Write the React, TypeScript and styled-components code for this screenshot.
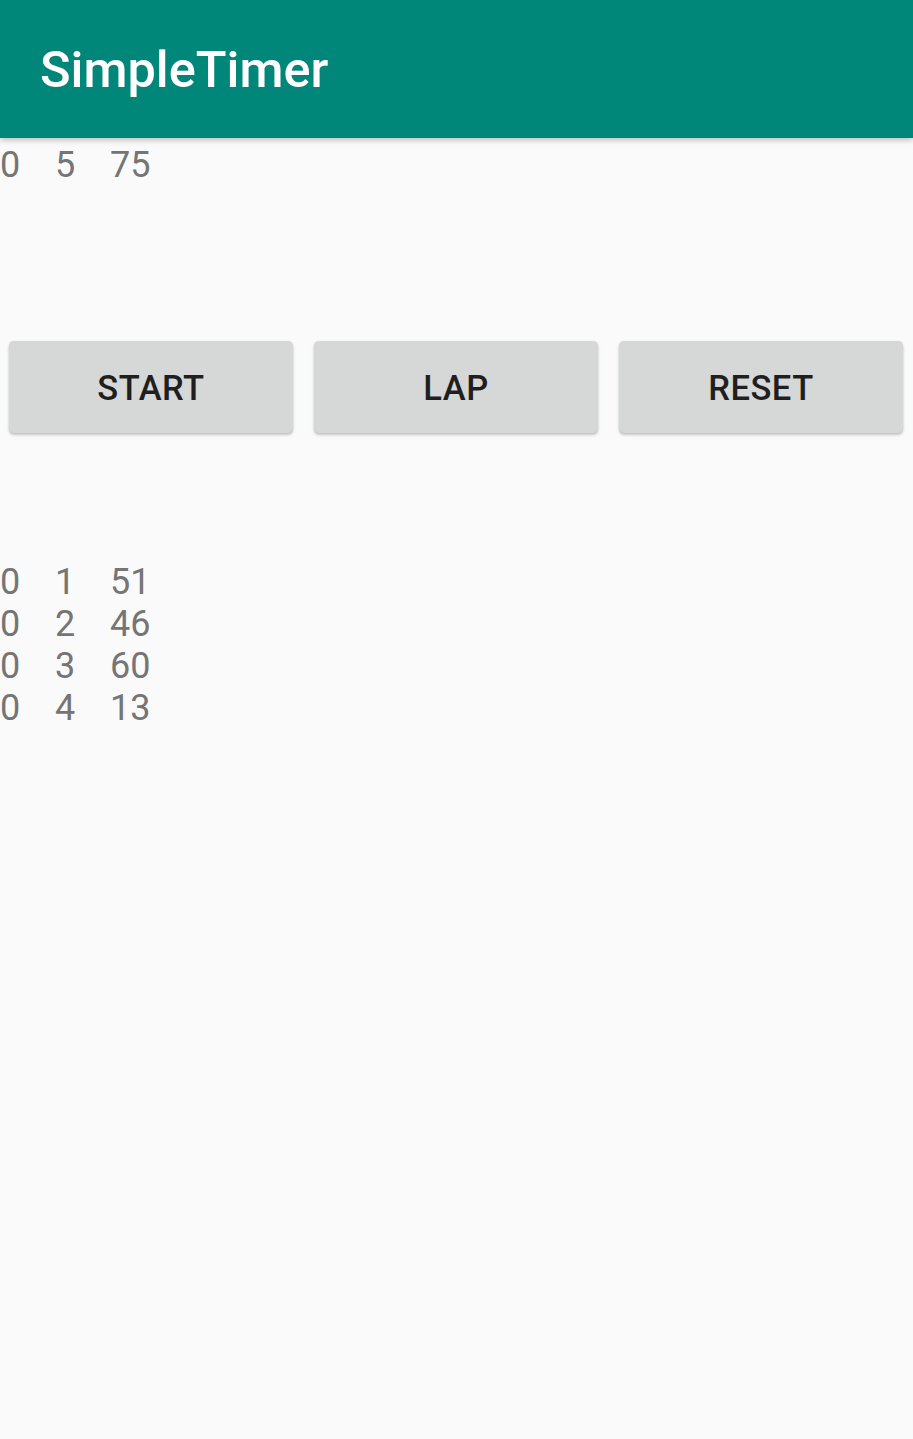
import React from "react";
import styled, { createGlobalStyle } from "styled-components";

const Global = createGlobalStyle`
  html, body { margin: 0; padding: 0; background: #fafafa; }
  body { font-family: Roboto, "Noto Sans", sans-serif; }
`;

const Screen = styled.div`
  width: 913px;
  min-height: 1439px;
  background: #fafafa;
  display: flex;
  flex-direction: column;
`;

const AppBar = styled.header`
  height: 138px;
  background: #00877a;
  display: flex;
  align-items: center;
  padding-left: 40px;
  box-shadow: 0 2px 6px rgba(0, 0, 0, 0.25);
  position: relative;
  z-index: 1;
`;

const Title = styled.h1`
  margin: 0;
  color: #ffffff;
  font-family: Roboto, sans-serif;
  font-weight: 500;
  font-size: 50.5px;
  letter-spacing: 0;
`;

const TimeRow = styled.div`
  display: grid;
  grid-template-columns: 55px 55px auto;
  font-family: Roboto, sans-serif;
  font-size: 36px;
  line-height: 42px;
  color: #757575;
`;

const Current = styled.div`
  padding-top: 6px;
  margin-bottom: 155px;
`;

const Buttons = styled.div`
  display: grid;
  grid-template-columns: repeat(3, 1fr);
  gap: 21px;
  padding: 0 10px 0 9px;
  height: 92px;
`;

const Button = styled.button`
  border: none;
  border-radius: 5px;
  background: #d6d7d7;
  color: #1f1f1f;
  font-family: Roboto, sans-serif;
  font-weight: 500;
  font-size: 34.5px;
  letter-spacing: 0.5px;
  padding: 2px 0 0;
  box-shadow: 0 2px 3px rgba(0, 0, 0, 0.22), 0 0 1px rgba(0, 0, 0, 0.12);
`;

const Laps = styled.div`
  margin-top: 128px;
`;

const laps = [
  ["0", "1", "51"],
  ["0", "2", "46"],
  ["0", "3", "60"],
  ["0", "4", "13"],
];

export default function App() {
  return (
    <Screen>
      <Global />
      <AppBar>
        <Title>SimpleTimer</Title>
      </AppBar>
      <Current>
        <TimeRow>
          <span>0</span>
          <span>5</span>
          <span>75</span>
        </TimeRow>
      </Current>
      <Buttons>
        <Button>START</Button>
        <Button>LAP</Button>
        <Button>RESET</Button>
      </Buttons>
      <Laps>
        {laps.map((l, i) => (
          <TimeRow key={i}>
            <span>{l[0]}</span>
            <span>{l[1]}</span>
            <span>{l[2]}</span>
          </TimeRow>
        ))}
      </Laps>
    </Screen>
  );
}
